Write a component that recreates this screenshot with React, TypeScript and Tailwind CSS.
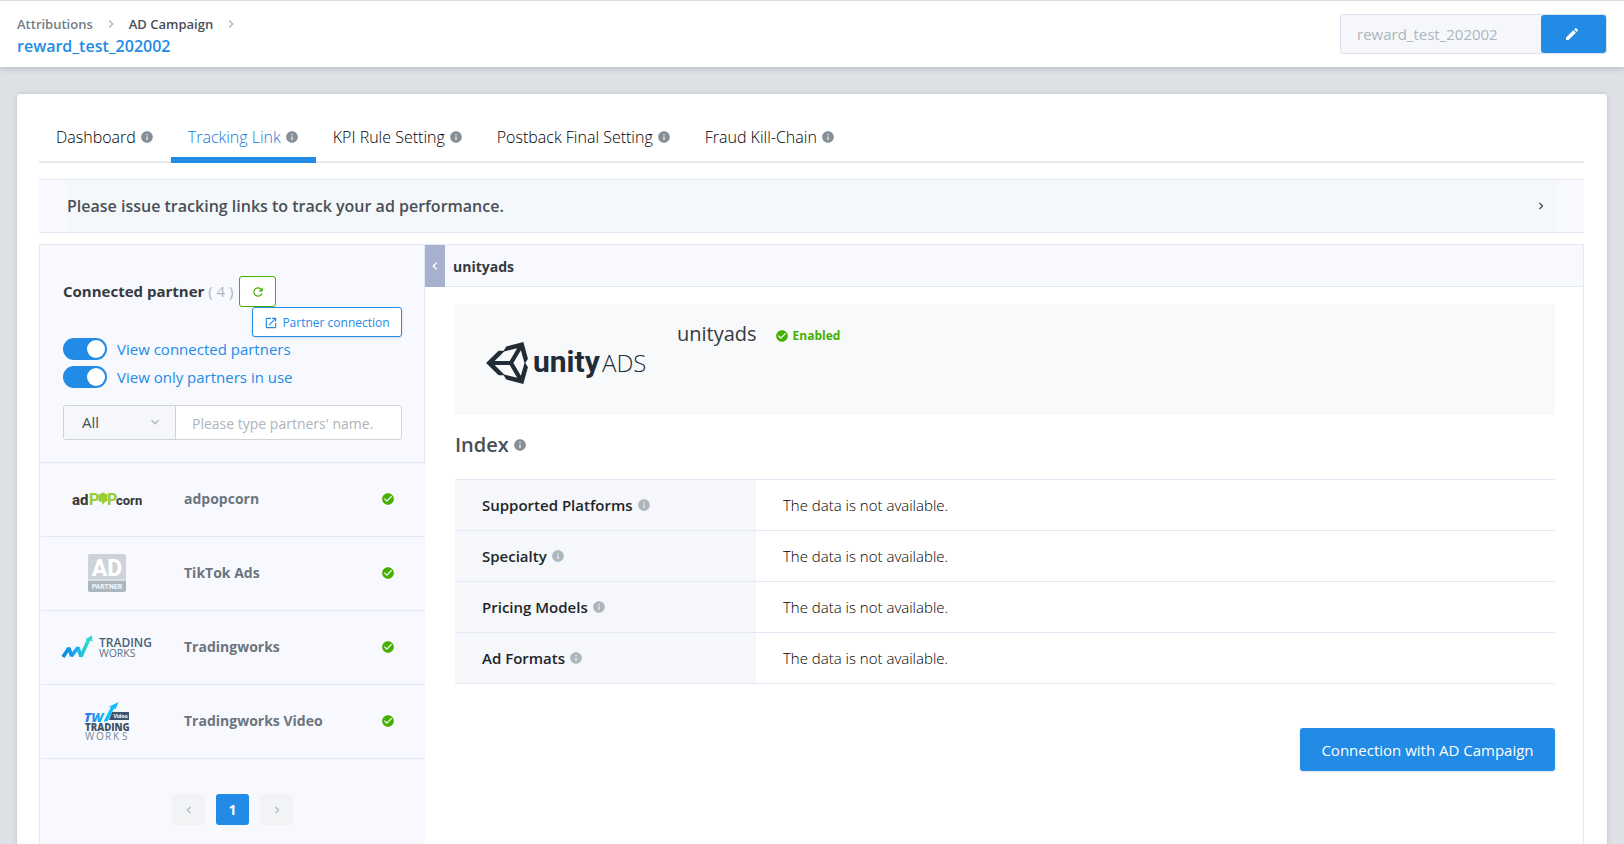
import React, { useState } from "react";
import {
  MdCheckCircle,
  MdChevronLeft,
  MdChevronRight,
  MdEdit,
  MdExpandMore,
  MdInfo,
  MdOpenInNew,
  MdRefresh,
} from "react-icons/md";

function AdpopcornLogo() {
  return (
    <svg viewBox="0 -4 70 22" className="h-[22px] w-[70px]" role="img" aria-label="adpopcorn">
      <g fontFamily="Roboto, sans-serif" fontWeight="800">
        <text x="0" y="12.500" fontSize="15" fill="#3c3c3c">
          ad
        </text>
        <text x="17" y="12.500" fontSize="16" fill="#9bcd33">
          P
        </text>
        <text x="35" y="12.500" fontSize="16" fill="#9bcd33">
          P
        </text>
        <text x="44" y="12.500" fontSize="13" fill="#3c3c3c">
          corn
        </text>
      </g>
      <g fill="#9bcd33">
        <circle cx="31" cy="5.500" r="3.900" />
        <circle cx="28.600" cy="4" r="2.300" />
        <circle cx="33.400" cy="4" r="2.300" />
        <circle cx="31" cy="2.800" r="2.200" />
        <circle cx="28.600" cy="7.500" r="2.300" />
        <circle cx="33.400" cy="7.500" r="2.300" />
        <path d="M29.800 8.500h4L30.500 13z" />
      </g>
    </svg>
  );
}

function AdPartnerLogo() {
  return (
    <svg viewBox="0 0 38 38" className="size-[38px]" role="img" aria-label="AD Partner">
      <path fill="#cdd3d9" d="M2 0h34a2 2 0 0 1 2 2v23H0V2a2 2 0 0 1 2-2z" />
      <path fill="#dde1e6" d="M0 25h38v2H0z" />
      <path fill="#adb5bd" d="M0 27h38v9a2 2 0 0 1-2 2H2a2 2 0 0 1-2-2z" />
      <text x="19" y="22" textAnchor="middle" fontFamily="Roboto, sans-serif" fontWeight="800" fontSize="23" fill="#fff">
        AD
      </text>
      <text x="19" y="34.500" textAnchor="middle" fontFamily="Roboto, sans-serif" fontWeight="700" fontSize="7" fill="#f4f6f8">
        PARTNER
      </text>
    </svg>
  );
}

function TradingworksLogo() {
  return (
    <svg viewBox="0 0 92 24" className="h-6 w-[92px]" role="img" aria-label="Trading Works">
      <defs>
        <linearGradient id="tw-line" x1="0" x2="1" y1="0" y2="0">
          <stop offset="0" stopColor="#0a86d8" />
          <stop offset="0.450" stopColor="#1aa7f0" />
          <stop offset="1" stopColor="#2fdcc8" />
        </linearGradient>
      </defs>
      <path
        d="M2 22 8 13 10.500 21 17 12.500 20 21.500 28 4"
        fill="none"
        stroke="url(#tw-line)"
        strokeWidth="3.600"
        strokeLinejoin="bevel"
      />
      <path fill="#2fd6d2" d="M24.500 4 31 0.500 31.500 6.500z" />
      <text x="38" y="12" fontFamily="Open Sans, sans-serif" fontWeight="600" fontSize="12" fill="#4a5f78">
        TRADING
      </text>
      <text x="38" y="22" fontFamily="Open Sans, sans-serif" fontSize="10.500" fill="#5d7187">
        WORKS
      </text>
    </svg>
  );
}

function TradingworksVideoLogo() {
  return (
    <svg viewBox="0 -2 46 42" className="h-[42px] w-[46px]" role="img" aria-label="Trading Works Video">
      <defs>
        <linearGradient id="twv-mark" x1="0" x2="1" y1="0" y2="0">
          <stop offset="0" stopColor="#3a6ee8" />
          <stop offset="1" stopColor="#12bdfb" />
        </linearGradient>
      </defs>
      <path fill="#3f546c" d="M28 10h17v8H25z" />
      <text x="0" y="19.500" fontFamily="Open Sans, sans-serif" fontStyle="italic" fontWeight="800" fontSize="13" fill="url(#twv-mark)">
        TW
      </text>
      <path fill="#12bdfb" d="M19.500 19.500 27 5 24 5.200 34.500 0 31.500 7.500 30.200 6.300 23.500 19.500z" />
      <text x="29.500" y="16" fontFamily="Open Sans, sans-serif" fontWeight="700" fontSize="5" fill="#fff">
        Video
      </text>
      <text x="1" y="29" fontFamily="Open Sans, sans-serif" fontWeight="800" fontSize="9.600" fill="#3f546c">
        TRADING
      </text>
      <text x="1 12 21 29 38" y="37.500" fontFamily="Open Sans, sans-serif" fontSize="10" fill="#75879a">
        WORKS
      </text>
    </svg>
  );
}

function UnityAdsLogo() {
  return (
    <svg viewBox="0 0 160 44" className="h-11 w-40" role="img" aria-label="Unity Ads">
      <svg x="0" y="1" width="42" height="42" viewBox="15 14 484 484">
        <path
          fill="#222c37"
          d="M498.110 206.400 445.310 14.720 248.200 66.080 219 116.140l-59.200-.430L15.540 256l144.280 140.320 59.170-.430 29.240 50 197.080 51.360 52.800-191.620-30-49.630zM223.770 124.200l150.780-37.690L288 232.330H114.870zm0 263.630L114.870 279.710H288l86.550 145.810zm193 14L330.170 256l86.580-145.840L458.560 256z"
        />
      </svg>
      <text x="47" y="31" fontFamily="Roboto, sans-serif" fontWeight="700" fontSize="30" fill="#222c37">
        unity
      </text>
      <text x="116" y="31" fontFamily="Open Sans, sans-serif" fontWeight="300" fontSize="24" fill="#222c37">
        ADS
      </text>
    </svg>
  );
}

const tabs = ["Dashboard", "Tracking Link", "KPI Rule Setting", "Postback Final Setting", "Fraud Kill-Chain"];

const partners = [
  { name: "adpopcorn", Logo: AdpopcornLogo },
  { name: "TikTok Ads", Logo: AdPartnerLogo },
  { name: "Tradingworks", Logo: TradingworksLogo },
  { name: "Tradingworks Video", Logo: TradingworksVideoLogo },
];

const indexRows = ["Supported Platforms", "Specialty", "Pricing Models", "Ad Formats"];

function Toggle({ label }: { label: string }) {
  const [on, setOn] = useState(true);
  return (
    <label className="flex h-7 cursor-pointer items-center gap-2.5 text-[15px] font-medium text-[#228be6]">
      <input type="checkbox" className="peer sr-only" checked={on} onChange={() => setOn(!on)} />
      <span className="flex h-[22px] w-11 items-center justify-start rounded-full bg-[#adb5bd] p-0.5 peer-checked:justify-end peer-checked:bg-[#228be6]">
        <span className="size-[18px] rounded-full bg-white" />
      </span>
      {label}
    </label>
  );
}

function Header() {
  return (
    <header className="z-10 flex h-[67px] items-center justify-between border-t border-[#dadce3] bg-white px-[17px] shadow-[0_2px_6px_rgba(60,70,80,0.2)]">
      <div className="pt-1">
        <nav aria-label="Breadcrumb" className="flex items-center gap-2.5 text-[13px] leading-5 font-semibold">
          <a href="#attributions" className="text-[#747c84]">Attributions</a>
          <MdChevronRight className="size-4 text-[#adb5bd]" />
          <a href="#campaign" className="text-[#495057]">AD Campaign</a>
          <MdChevronRight className="size-4 text-[#adb5bd]" />
        </nav>
        <h1 className="text-base leading-6 font-semibold text-[#228be6]">reward_test_202002</h1>
      </div>
      <div className="flex h-10 w-[267px] rounded-[3px] border border-[#dee2ec] bg-[#f5f7fb]">
        <input
          aria-label="Campaign name"
          disabled
          value="reward_test_202002"
          className="min-w-0 flex-1 px-4 text-[15px] text-[#adb5bd]"
        />
        <button aria-label="Edit name" className="flex w-[65px] items-center justify-center rounded-[3px] bg-[#228be6] pr-1 text-white">
          <MdEdit className="size-4" />
        </button>
      </div>
    </header>
  );
}

function Tabs() {
  const [active, setActive] = useState("Tracking Link");
  return (
    <div role="tablist" className="flex h-[54px] border-b-2 border-[#e6eaef]">
      {tabs.map((tab) => (
        <button
          key={tab}
          role="tab"
          aria-selected={tab === active}
          onClick={() => setActive(tab)}
          className="-mb-0.5 flex items-center gap-1 border-b-6 border-transparent px-[17px] pt-2 text-base font-light text-black aria-selected:border-[#228be6] aria-selected:text-[#1279dc]"
        >
          {tab}
          <MdInfo className="size-3.5 text-[#868e96]" />
        </button>
      ))}
    </div>
  );
}

function PartnerPanel() {
  return (
    <aside className="flex w-[386px] shrink-0 flex-col border-l border-[#e4e8f4] bg-[#f8f9fe]">
      <div className="h-[218px] border-r border-b border-[#e4e8f4] pt-[31px] pr-[22px] pl-[23px]">
        <div className="flex h-[31px] items-center gap-1.5">
          <h2 className="text-[15px] font-bold text-[#343a40]">
            Connected partner <span className="font-medium text-[#adb5bd]">( 4 )</span>
          </h2>
          <button
            aria-label="Refresh"
            className="flex h-[31px] w-[37px] items-center justify-center rounded-[3px] border border-[#45b000] bg-white text-[#45b000]"
          >
            <MdRefresh className="size-3.5" />
          </button>
        </div>
        <div className="flex justify-end">
          <button className="flex h-[30px] w-[150px] items-center justify-center gap-1 rounded-[3px] border border-[#228be6] bg-white pt-0.5 text-xs text-[#228be6] shadow-sm">
            <MdOpenInNew className="size-3.5" />
            Partner connection
          </button>
        </div>
        <div className="-mt-0.5">
          <Toggle label="View connected partners" />
          <Toggle label="View only partners in use" />
        </div>
        <div className="mt-3.5 flex h-[35px] rounded-[3px] border border-[#ced4da] bg-white">
          <div className="relative w-[112px] border-r border-[#ced4da] bg-[#f5f7fb]">
            <select
              aria-label="Partner filter"
              className="size-full appearance-none bg-transparent pl-[18px] text-[15px] text-[#495057]"
            >
              <option>All</option>
            </select>
            <MdExpandMore className="pointer-events-none absolute top-2 right-3 size-4 text-[#adb5bd]" />
          </div>
          <input
            aria-label="Partner name"
            placeholder="Please type partners' name."
            className="min-w-0 flex-1 bg-transparent px-4 pt-0.5 text-sm outline-none placeholder:text-[#adb5bd]"
          />
        </div>
      </div>
      <ul className="ml-px">
        {partners.map(({ name, Logo }) => (
          <li key={name} className="flex h-[74px] items-center border-b border-[#e4e8f4] pb-0.5">
            <div className="ml-[19px] flex w-[94px] justify-center">
              <Logo />
            </div>
            <span className="ml-[30px] flex-1 text-sm font-bold text-[#6c757d]">{name}</span>
            <MdCheckCircle className="mr-[30px] size-3.5 text-[#45b000]" />
          </li>
        ))}
      </ul>
      <nav aria-label="Pages" className="mt-[35px] flex justify-center gap-[11px]">
        <button aria-label="Previous page" className="flex h-[31px] w-[33px] items-center justify-center rounded-[3px] bg-[#f1f3f5] text-[#adb5bd]">
          <MdChevronLeft className="size-3.5" />
        </button>
        <button aria-current="page" className="h-[31px] w-[33px] rounded-[3px] bg-[#228be6] text-sm font-bold text-white">
          1
        </button>
        <button aria-label="Next page" className="flex h-[31px] w-[33px] items-center justify-center rounded-[3px] bg-[#f1f3f5] text-[#adb5bd]">
          <MdChevronRight className="size-3.5" />
        </button>
      </nav>
    </aside>
  );
}

function DetailPanel() {
  return (
    <section className="min-w-0 flex-1 border-r border-[#e4e8f4]">
      <div className="flex h-[42px] items-center gap-2 border-b border-[#e4e8f4] bg-[#f8f9fe]">
        <button aria-label="Collapse panel" className="-mb-px flex h-[42px] w-5 items-center justify-center bg-[#a5b1ce] text-white">
          <MdChevronLeft className="size-4" />
        </button>
        <h2 className="pt-0.5 text-sm font-bold text-[#343a40]">unityads</h2>
      </div>
      <div className="pt-[17px] pr-7 pl-[30px]">
        <div className="flex h-[111px] bg-[#f8f9fb] pl-[31px]">
          <div className="flex w-[191px] items-center pt-1.5">
            <UnityAdsLogo />
          </div>
          <div className="flex h-[60px] items-center gap-[18px]">
            <h3 className="text-xl text-[#343a40]">unityads</h3>
            <span className="flex items-center gap-1 pt-1 text-xs font-bold text-[#45b000]">
              <MdCheckCircle className="size-3.5" />
              Enabled
            </span>
          </div>
        </div>
        <h3 className="mt-4 flex h-7 items-center gap-1 text-xl font-semibold text-[#495057]">
          Index
          <MdInfo className="size-3.5 text-[#868e96]" />
        </h3>
        <table className="mt-5 w-full border-t border-[#e4e8f4] text-left text-[15px]">
          <tbody>
            {indexRows.map((row) => (
              <tr key={row} className="h-[51px] border-b border-[#e4e8f4]">
                <th scope="row" className="w-[301px] bg-[#f5f7fb] pl-[27px] font-semibold text-[#212529]">
                  <span className="flex items-center gap-1">
                    {row}
                    <MdInfo className="size-3.5 text-[#adb5bd]" />
                  </span>
                </th>
                <td className="pl-[27px] font-light text-black">The data is not available.</td>
              </tr>
            ))}
          </tbody>
        </table>
        <div className="mt-11 flex justify-end">
          <button className="h-[43px] w-[255px] rounded-[3px] bg-[#228be6] pt-0.5 text-[15px] text-white shadow-sm">
            Connection with AD Campaign
          </button>
        </div>
      </div>
    </section>
  );
}

export default function App() {
  return (
    <div className="flex min-h-screen flex-col bg-[#dde1e6] font-['Open_Sans','Noto_Sans',sans-serif]">
      <Header />
      <main className="mx-[17px] mt-[27px] flex flex-1 flex-col rounded-t-[3px] bg-white pt-[15px] pr-[23px] pl-[22px] shadow-[0_0_4px_rgba(60,70,80,0.2)]">
        <Tabs />
        <button className="mt-4 flex h-[54px] w-full border-y border-[#e4e8f4] bg-[#f8f9fe] px-7 text-left">
          <span className="flex h-full flex-1 items-center justify-between bg-[#f4f8fb] pr-2 text-base font-semibold text-[#495057]">
            Please issue tracking links to track your ad performance.
            <MdChevronRight className="size-3.5 text-[#343a40]" />
          </span>
        </button>
        <div className="mt-[11px] flex flex-1 border-t border-[#e4e8f4]">
          <PartnerPanel />
          <DetailPanel />
        </div>
      </main>
    </div>
  );
}
